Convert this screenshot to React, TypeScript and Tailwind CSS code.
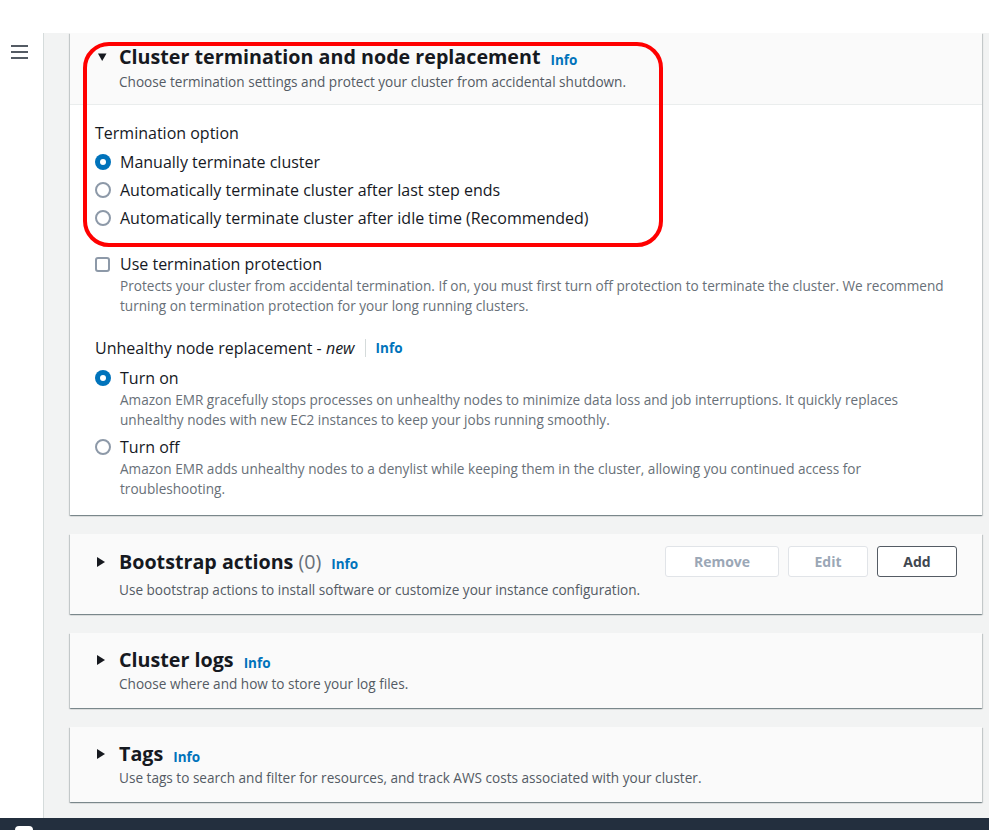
import type { ReactNode } from "react";

function Caret({ open }: { open?: boolean }) {
  return open ? (
    <svg width="10" height="10" viewBox="0 0 10 10" className="shrink-0">
      <path d="M1 1.5h8.5L5.2 9z" fill="#16191f" />
    </svg>
  ) : (
    <svg width="10" height="12" viewBox="0 0 10 12" className="shrink-0">
      <path d="M1 1v10l8-5z" fill="#16191f" />
    </svg>
  );
}

function Info() {
  return <span className="text-[13.5px] font-bold text-[#0073bb]">Info</span>;
}

function Radio({ checked }: { checked?: boolean }) {
  return checked ? (
    <span className="w-4 h-4 rounded-full bg-[#0073bb] flex items-center justify-center shrink-0">
      <span className="w-[6px] h-[6px] rounded-full bg-white" />
    </span>
  ) : (
    <span className="w-4 h-4 rounded-full border-2 border-[#8d99a8] bg-white shrink-0" />
  );
}

function RadioRow({ label, checked, children }: { label: string; checked?: boolean; children?: ReactNode }) {
  return (
    <div>
      <div className="flex items-center gap-[9px] h-7">
        <Radio checked={checked} />
        <span className="text-[16px] text-[#16191f]">{label}</span>
      </div>
      {children && <div className="pl-[25px] -mt-[2px] text-[13.6px] leading-5 text-[#687078]">{children}</div>}
    </div>
  );
}

function CollapsedCard({ title, count, desc, actions, tall }: { title: string; count?: string; desc: string; actions?: boolean; tall?: boolean }) {
  return (
    <section className="bg-[#fafafa] shadow-[0_1px_1px_0_rgba(0,28,36,0.3),1px_1px_1px_0_rgba(0,28,36,0.15),-1px_1px_1px_0_rgba(0,28,36,0.15)] pl-[26px] pr-[25px] pb-[15px] shrink-0" style={{ paddingTop: tall ? 12 : 15 }}>
      <div className="flex items-center justify-between" style={{ height: tall ? 31 : 24 }}>
        <div className="flex items-center">
          <Caret />
          <h2 className="ml-[13px] text-[19.7px] leading-6 font-bold text-[#16191f]">{title}</h2>
          {count && <span className="ml-[5px] text-[19.7px] leading-6 text-[#687078]">{count}</span>}
          <span className="ml-[10px] mt-[3px]">
            <Info />
          </span>
        </div>
        {actions && (
          <div className="flex gap-[9px]">
            <button className="w-[114px] h-[31px] rounded-[3px] border border-[#e1e4e8] bg-white text-[14px] font-bold text-[#9ba7b6]">Remove</button>
            <button className="w-[80px] h-[31px] rounded-[3px] border border-[#e1e4e8] bg-white text-[14px] font-bold text-[#9ba7b6]">Edit</button>
            <button className="w-[80px] h-[31px] rounded-[3px] border border-[#545b64] bg-white text-[14px] font-bold text-[#414750]">Add</button>
          </div>
        )}
      </div>
      <p className="ml-[23px] text-[13.6px] leading-[18px] text-[#545b64]" style={{ marginTop: tall ? 4 : 3 }}>
        {desc}
      </p>
    </section>
  );
}

export default function App() {
  return (
    <div className="relative w-[989px] h-[830px] flex flex-col bg-white overflow-hidden" style={{ fontFamily: '"Open Sans", "Noto Sans", sans-serif' }}>
      <div className="h-[33px] shrink-0 bg-white" />
      <div className="flex flex-1 min-h-0">
        <aside className="w-[44px] shrink-0 bg-white border-r border-[#d5dbdb] pt-[12px] pl-[11px]">
          <div className="flex flex-col gap-[4px] w-[17px]">
            <span className="h-[2px] bg-[#545b64]" />
            <span className="h-[2px] bg-[#545b64]" />
            <span className="h-[2px] bg-[#545b64]" />
          </div>
        </aside>
        <main className="flex-1 bg-[#f2f3f3] pl-[26px] pr-[7px] flex flex-col gap-[19px] overflow-hidden">
          {/* Cluster termination card */}
          <section className="bg-white shrink-0 shadow-[0_1px_1px_0_rgba(0,28,36,0.3),1px_1px_1px_0_rgba(0,28,36,0.15),-1px_1px_1px_0_rgba(0,28,36,0.15)]">
            <div className="bg-[#fafafa] border-b border-[#eaeded] pt-3 pb-[13px] pl-[27px]">
              <div className="flex items-center h-6">
                <Caret open />
                <h2 className="ml-[12px] text-[19.7px] leading-6 font-bold text-[#16191f]">Cluster termination and node replacement</h2>
                <span className="ml-[10px] mt-[3px]">
                  <Info />
                </span>
              </div>
              <p className="ml-[22px] mt-1 text-[13.6px] leading-[18px] text-[#545b64]">
                Choose termination settings and protect your cluster from accidental shutdown.
              </p>
            </div>
            <div className="pl-[25px] pr-[25px] pt-[18px] pb-[16px]">
              <div className="text-[16px] leading-5 text-[#16191f]">Termination option</div>
              <div className="mt-[5px]">
                <RadioRow label="Manually terminate cluster" checked />
                <RadioRow label="Automatically terminate cluster after last step ends" />
                <RadioRow label="Automatically terminate cluster after idle time (Recommended)" />
              </div>

              <div className="mt-[22px]">
                <div className="flex items-center gap-[10px] h-5">
                  <span className="w-[15px] h-[15px] rounded-[3px] border-2 border-[#8d99a8] bg-white shrink-0" />
                  <span className="text-[16px] text-[#16191f]">Use termination protection</span>
                </div>
                <p className="pl-[25px] mt-[2px] text-[13.6px] leading-[19.5px] text-[#687078]">
                  Protects your cluster from accidental termination. If on, you must first turn off protection to terminate the cluster. We recommend
                  <br />
                  turning on termination protection for your long running clusters.
                </p>
              </div>

              <div className="mt-[23px] flex items-center h-5 text-[16px] text-[#16191f]">
                <span>
                  Unhealthy node replacement - <i>new</i>
                </span>
                <span className="mx-[10px] w-px h-[18px] bg-[#d5dbdb]" />
                <Info />
              </div>
              <div className="mt-[6px]">
                <RadioRow label="Turn on" checked>
                  Amazon EMR gracefully stops processes on unhealthy nodes to minimize data loss and job interruptions. It quickly replaces
                  <br />
                  unhealthy nodes with new EC2 instances to keep your jobs running smoothly.
                </RadioRow>
                <div className="mt-[3px]">
                  <RadioRow label="Turn off">
                    Amazon EMR adds unhealthy nodes to a denylist while keeping them in the cluster, allowing you continued access for
                    <br />
                    troubleshooting.
                  </RadioRow>
                </div>
              </div>
            </div>
          </section>

          <CollapsedCard
            title="Bootstrap actions"
            count="(0)"
            desc="Use bootstrap actions to install software or customize your instance configuration."
            actions
            tall
          />
          <CollapsedCard title="Cluster logs" desc="Choose where and how to store your log files." />
          <CollapsedCard title="Tags" desc="Use tags to search and filter for resources, and track AWS costs associated with your cluster." />
        </main>
      </div>
      <div className="relative h-[12px] shrink-0 bg-[#232f3e]">
        <span className="absolute left-[15px] top-[8px] w-[18px] h-[8px] rounded-[4px] bg-white" />
      </div>

      {/* red annotation */}
      <div className="absolute left-[83px] top-[42px] w-[580px] h-[205px] border-4 border-[#ff0000] rounded-[26px] pointer-events-none" />
    </div>
  );
}
